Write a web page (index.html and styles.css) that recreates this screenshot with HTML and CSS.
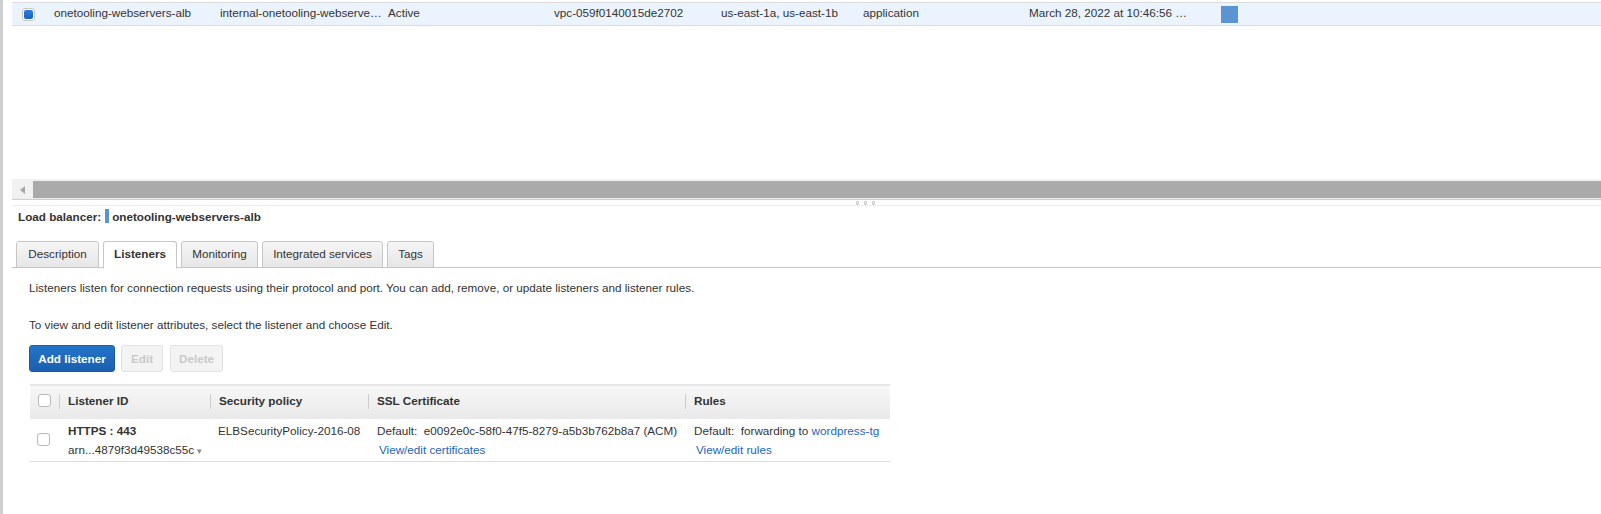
FILE: index.html
```html
<!DOCTYPE html>
<html>
<head>
<meta charset="utf-8">
<link rel="stylesheet" href="styles.css">
</head>
<body>
<div class="page">
  <div class="grid">
    <div class="grid-row selected">
      <div class="cell cell-cb"><span class="cb-sel"><span class="cb-dot"></span></span></div>
      <div class="cell w166">onetooling-webservers-alb</div>
      <div class="cell w168">internal-onetooling-webserve…</div>
      <div class="cell w166">Active</div>
      <div class="cell w167">vpc-059f0140015de2702</div>
      <div class="cell w142">us-east-1a, us-east-1b</div>
      <div class="cell w166">application</div>
      <div class="cell w192">March 28, 2022 at 10:46:56 …</div>
      <div class="cell"><span class="swatch"></span></div>
    </div>
  </div>
  <div class="hscroll">
    <div class="hs-arrow"><svg width="5" height="8" viewBox="0 0 5 8"><path d="M5 0 L0 4 L5 8 Z" fill="#a6a6a6"/></svg></div>
    <div class="hs-thumb"></div>
  </div>
  <div class="splitter"><span class="grip"><i></i><i></i><i></i></span></div>
  <div class="details">
    <div class="lb-title">Load balancer: <span class="lb-bar"></span> <span class="lb-name">onetooling-webservers-alb</span></div>
    <div class="tabs">
      <div class="tab t-desc">Description</div>
      <div class="tab active t-list">Listeners</div>
      <div class="tab t-mon">Monitoring</div>
      <div class="tab t-int">Integrated services</div>
      <div class="tab t-tags">Tags</div>
    </div>
    <div class="panel">
      <p class="p1">Listeners listen for connection requests using their protocol and port. You can add, remove, or update listeners and listener rules.</p>
      <p class="p2">To view and edit listener attributes, select the listener and choose Edit.</p>
      <div class="buttons">
        <button class="btn primary">Add listener</button>
        <button class="btn disabled b-edit">Edit</button>
        <button class="btn disabled b-del">Delete</button>
      </div>
      <table class="ltable">
        <colgroup>
          <col class="c-cb"><col class="c-id"><col class="c-sp"><col class="c-ssl"><col class="c-rules">
        </colgroup>
        <thead>
          <tr>
            <th class="th-cb"><span class="cb"></span></th>
            <th><span class="sep"></span>Listener ID</th>
            <th><span class="sep"></span>Security policy</th>
            <th><span class="sep"></span>SSL Certificate</th>
            <th><span class="sep"></span>Rules</th>
          </tr>
        </thead>
        <tbody>
          <tr>
            <td class="td-cb"><span class="cb"></span></td>
            <td class="td-id"><div class="l1 strong">HTTPS : 443</div><div class="l2">arn...4879f3d49538c55c <span class="caret">▾</span></div></td>
            <td class="td-sp"><div class="l1">ELBSecurityPolicy-2016-08</div></td>
            <td class="td-ssl"><div class="l1">Default:&nbsp; e0092e0c-58f0-47f5-8279-a5b3b762b8a7 (ACM)</div><div class="l2"><a class="link">View/edit certificates</a></div></td>
            <td class="td-rules"><div class="l1">Default:&nbsp; forwarding to <a class="link">wordpress-tg</a></div><div class="l2"><a class="link">View/edit rules</a></div></td>
          </tr>
        </tbody>
      </table>
    </div>
  </div>
</div>
</body>
</html>
```
FILE: styles.css
```css
* { box-sizing: border-box; }
html, body { margin: 0; padding: 0; background: #fff; }
body {
  font-family: "Liberation Sans", Arial, sans-serif;
  font-size: 11.7px;
  color: #333;
  width: 1601px;
  height: 514px;
  overflow: hidden;
}
.page {
  border-left: 3px solid #cfcfcf;
  padding-left: 9px;
  height: 514px;
}
.grid {
  height: 179px;
  padding-top: 2px;
}
.grid-row {
  display: flex;
  align-items: center;
  height: 24px;
  padding-bottom: 3px;
  border-top: 1px solid #dcdcdc;
  border-bottom: 1px solid #dcdcdc;
}
.grid-row.selected { background: #ebf3fe; }
.cell { white-space: nowrap; }
.cell-cb { width: 42px; padding-left: 10px; padding-top: 3px; display: flex; align-items: center; }
.w166 { width: 166px; }
.w167 { width: 167px; }
.w168 { width: 168px; }
.w142 { width: 142px; }
.w192 { width: 192px; }
.cb-sel {
  display: flex; align-items: center; justify-content: center;
  width: 13px; height: 13px;
  border: 1px solid #c8c8c8; border-radius: 3px; background: #fff;
}
.cb-dot {
  width: 9px; height: 9px; border-radius: 2px;
  background: linear-gradient(#2b7de0, #1a62c0);
}
.swatch { display: block; width: 17px; height: 17px; margin-top: 3px; background: #5b94d2; }

.hscroll {
  display: flex;
  height: 21px;
  border-top: 2px solid #f0f0f0;
  border-bottom: 1px solid #cfcfcf;
  box-shadow: inset 0 -2px 0 #ececec;
}
.hs-arrow {
  width: 21px; height: 17px; background: #f1f1f1;
  display: flex; align-items: center; justify-content: center;
}
.hs-thumb { flex: 1; height: 17px; background: #aaaaaa; }

.splitter {
  position: relative;
  height: 6px;
  border-bottom: 1px solid #ececec;
}
.grip {
  position: absolute; left: 844px; top: 1px;
  display: flex; gap: 5px;
}
.grip i {
  display: block; width: 3px; height: 4px;
  border: 1px solid #c8c8c8; border-radius: 1px; background: #f4f4f4;
}

.details { padding-left: 4px; }
.lb-title {
  display: flex; align-items: center;
  height: 16px; margin-top: 2px;
  padding-left: 2px;
  font-weight: bold; color: #333;
}
.lb-bar {
  display: inline-block; width: 4px; height: 14px;
  background: #5b94d2; margin: 0 3px 0 4px;
}
.tabs {
  display: flex; gap: 4px;
  margin-top: 17px;
  height: 27px;
  border-bottom: 1px solid #c6c6c6;
  margin-left: -4px;
  padding-left: 4px;
}
.tab {
  height: 27px;
  line-height: 23px;
  text-align: center;
  border: 1px solid #c6c6c6;
  border-radius: 3px 3px 0 0;
  background: linear-gradient(#f6f6f6, #e6e6e6);
  color: #333;
}
.t-desc { width: 83px; }
.t-list { width: 74px; }
.t-mon { width: 77px; }
.t-int { width: 121px; }
.t-tags { width: 47px; }
.tab.active {
  background: #fff;
  font-weight: bold;
  height: 28px;
  border-bottom-color: #fff;
}
.panel { padding-left: 13px; padding-top: 12px; }
.panel p { margin: 0; line-height: 16px; }
.p2 { margin-top: 21px !important; }
.buttons { display: flex; gap: 6px; margin-top: 12px; }
.btn {
  font-family: "Liberation Sans", Arial, sans-serif;
  font-size: 11.7px; font-weight: bold;
  height: 27px; padding: 0;
  border-radius: 3px;
  white-space: nowrap;
}
.btn.primary {
  width: 86px;
  color: #fff;
  background: linear-gradient(#2373ca, #1a5fae);
  border: 1px solid #1a5aa2;
}
.btn.disabled {
  color: #c9c9c9;
  background: #f3f3f3;
  border: 1px solid #e2e2e2;
}
.b-edit { width: 42px; }
.b-del { width: 53px; margin-left: 1px; }
.ltable {
  margin-top: 12px;
  margin-left: 1px;
  border-collapse: collapse;
  table-layout: fixed;
  width: 860px;
}
.c-cb { width: 29px; }
.c-id { width: 151px; }
.c-sp { width: 158px; }
.c-ssl { width: 317px; }
.c-rules { width: 205px; }
.ltable thead tr {
  height: 34px;
  background: linear-gradient(#f7f7f7, #e9e9e9);
  border-top: 1px solid #e4e4e4;
}
.ltable th {
  position: relative;
  text-align: left;
  font-weight: bold;
  padding: 0 0 3px 9px;
  white-space: nowrap;
}
.ltable th.th-cb { padding-left: 8px; }
.sep {
  position: absolute; left: 0; top: 9px;
  width: 1px; height: 15px; background: #cdcdcd;
}
.cb {
  display: block; width: 13px; height: 13px;
  border: 1px solid #b9b9b9; border-radius: 3px; background: #fff;
}
.ltable tbody tr { height: 43px; border-bottom: 1px solid #dcdcdc; }
.ltable td { vertical-align: top; padding: 4px 0 0 9px; white-space: nowrap; }
.ltable td.td-cb { padding: 14px 0 0 7px; }
.ltable td.td-sp { padding-left: 8px; }
.ltable td.td-ssl { padding-left: 9px; }
.ltable td.td-ssl .l2 { padding-left: 2px; }
.ltable td.td-rules { padding-left: 9px; }
.ltable td.td-rules .l2 { padding-left: 2px; }
.l1 { line-height: 16px; }
.l2 { line-height: 16px; margin-top: 3px; }
.strong { font-weight: bold; }
.caret { color: #888; font-size: 9px; }
.link { color: #1b66b8; text-decoration: none; }
```
